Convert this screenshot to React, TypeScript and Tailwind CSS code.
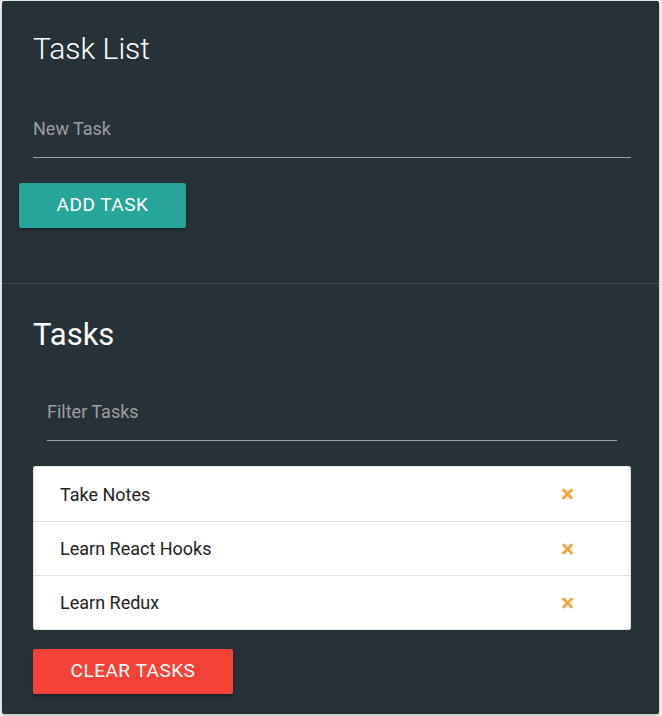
import { FaTimes } from 'react-icons/fa';

const tasks = ['Take Notes', 'Learn React Hooks', 'Learn Redux'];

export default function App() {
  return (
    <div className="min-h-[716px] bg-[#f3f3f3] pl-[2px] pr-[3px] pt-[1px] pb-[2px] font-['Roboto',sans-serif]">
      <div className="rounded-[2px] bg-[#263238] shadow-[0_1px_3px_rgba(0,0,0,0.3)]">
        {/* add task */}
        <div className="pl-[31px] pr-[28px] pt-[30px] pb-[55px]">
          <h1 className="text-[30px] font-light leading-[36px] text-white">Task List</h1>
          <input
            placeholder="New Task"
            className="mt-[44px] block h-[47px] w-full border-b border-[#9e9e9e] bg-transparent pb-[11px] text-[18px] text-white outline-none placeholder:text-[#9e9e9e]"
          />
          <button className="ml-[-14px] mt-[25px] h-[45px] w-[167px] rounded-[2px] bg-[#26a69a] text-[19px] uppercase tracking-[0.5px] text-white shadow-[0_2px_3px_rgba(0,0,0,0.35)]">
            Add Task
          </button>
        </div>

        <div className="h-px bg-[#3c474d]" />

        {/* tasks */}
        <div className="pl-[31px] pr-[28px] pt-[33px] pb-[20px]">
          <h2 className="text-[31px] leading-[36px] text-white">Tasks</h2>
          <div className="px-[14px]">
            <input
              placeholder="Filter Tasks"
              className="mt-[41px] block h-[47px] w-full border-b border-[#9e9e9e] bg-transparent pb-[11px] text-[18px] text-white outline-none placeholder:text-[#9e9e9e]"
            />
          </div>
          <ul className="mt-[25px] overflow-hidden rounded-[2px] border border-[#e0e0e0] bg-white">
            {tasks.map((t, i) => (
              <li
                key={t}
                className={`flex h-[54px] items-center justify-between pl-[26px] pr-[56px] text-[18px] text-[#222] ${i > 0 ? 'border-t border-[#e0e0e0]' : ''}`}
              >
                <span>{t}</span>
                <FaTimes className="h-[16px] w-[13px] text-[#ffa23d]" />
              </li>
            ))}
          </ul>
          <button className="mt-[19px] h-[45px] w-[200px] rounded-[2px] bg-[#f44336] text-[19px] uppercase tracking-[0.5px] text-white shadow-[0_2px_3px_rgba(0,0,0,0.35)]">
            Clear Tasks
          </button>
        </div>
      </div>
    </div>
  );
}
